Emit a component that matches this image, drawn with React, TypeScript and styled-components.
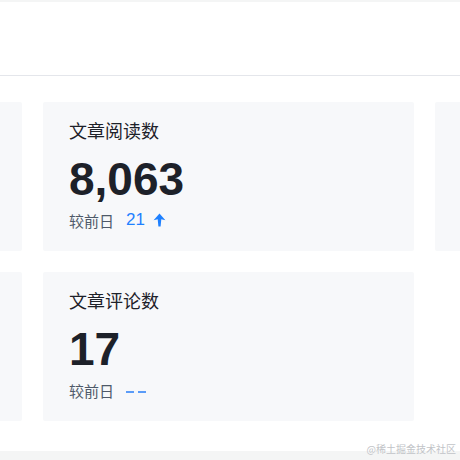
import React from 'react';
import styled, {createGlobalStyle} from 'styled-components';

const GlobalStyle = createGlobalStyle`
    html, body {
        margin: 0;
        padding: 0;
        background: #ffffff;
        font-family: 'Noto Sans CJK SC', 'Liberation Sans', sans-serif;
    }
`;

interface Stat {
    title: string;
    value: string;
    delta?: string;
}

const rows: Stat[][] = [
    [
        {title: '文章展现数', value: '12,480', delta: '36'},
        {title: '文章阅读数', value: '8,063', delta: '21'},
        {title: '文章点赞数', value: '96', delta: '2'},
    ],
    [
        {title: '文章收藏数', value: '58'},
        {title: '文章评论数', value: '17'},
    ],
];

const ArrowUp = () => (
    <svg width="13" height="14" viewBox="0 0 13 14" fill="#1e80ff">
        <path d="M6.5 0.6 L12.4 7.2 L8.3 6.2 L7.6 13.4 L5.4 13.4 L4.7 6.2 L0.6 7.2 Z"/>
    </svg>
);

export default function App() {
    return (
        <Page>
            <GlobalStyle/>
            <TopStrip/>
            <Header/>
            <Body>
                {rows.map((row, i) => (
                    <Row key={i}>
                        {row.map((s) => (
                            <Card key={s.title}>
                                <Title>{s.title}</Title>
                                <Value>{s.value}</Value>
                                <Compare>
                                    <CompareLabel>{'较前日'}</CompareLabel>
                                    {s.delta ? (
                                        <Delta>
                                            {s.delta}
                                            <ArrowUp/>
                                        </Delta>
                                    ) : (
                                        <Dashes>
                                            <Dash/>
                                            <Dash/>
                                        </Dashes>
                                    )}
                                </Compare>
                            </Card>
                        ))}
                    </Row>
                ))}
            </Body>
            <BottomBand/>
            <Watermark>{'@稀土掘金技术社区'}</Watermark>
        </Page>
    );
}

const Page = styled.div`
    position: relative;
    width: 460px;
    height: 460px;
    overflow: hidden;
    display: flex;
    flex-direction: column;
`;

const TopStrip = styled.div`
    flex-shrink: 0;
    height: 2px;
    background: #f4f5f5;
`;

const Header = styled.div`
    flex-shrink: 0;
    height: 73px;
    background: #ffffff;
    border-bottom: 1px solid #e4e6eb;
`;

const Body = styled.div`
    flex-shrink: 0;
    display: flex;
    flex-direction: column;
    gap: 21px;
    padding-top: 26px;
`;

const Row = styled.div`
    display: flex;
    gap: 21px;
    margin-left: -349px;
`;

const Card = styled.div`
    flex: 0 0 371px;
    height: 149px;
    box-sizing: border-box;
    padding: 14px 26px 0;
    background: #f7f8fa;
    border-radius: 2px;
`;

const Title = styled.div`
    font-size: 18px;
    line-height: 28px;
    color: #1d2129;
`;

const Value = styled.div`
    margin-top: 11px;
    font-family: 'Liberation Sans', 'Noto Sans CJK SC', sans-serif;
    font-weight: 700;
    font-size: 46px;
    line-height: 48px;
    color: #1d2129;
`;

const Compare = styled.div`
    display: flex;
    align-items: center;
    gap: 12px;
    margin-top: 5px;
    height: 24px;
`;

const CompareLabel = styled.span`
    font-size: 15px;
    color: #4e5969;
`;

const Delta = styled.span`
    display: inline-flex;
    align-items: center;
    gap: 8px;
    font-family: 'Liberation Sans', sans-serif;
    font-size: 17px;
    color: #1e80ff;
`;

const Dashes = styled.span`
    display: inline-flex;
    gap: 4px;
    margin-top: 4px;
`;

const Dash = styled.span`
    width: 8px;
    height: 2px;
    background: #5b9cf8;
`;

const BottomBand = styled.div`
    flex-shrink: 0;
    margin-top: auto;
    height: 9px;
    background: #f4f5f5;
`;

const Watermark = styled.div`
    position: absolute;
    right: 4px;
    bottom: 4px;
    font-family: 'Noto Sans CJK SC', serif;
    font-size: 10px;
    line-height: 14px;
    color: #c2c4c8;
`;
